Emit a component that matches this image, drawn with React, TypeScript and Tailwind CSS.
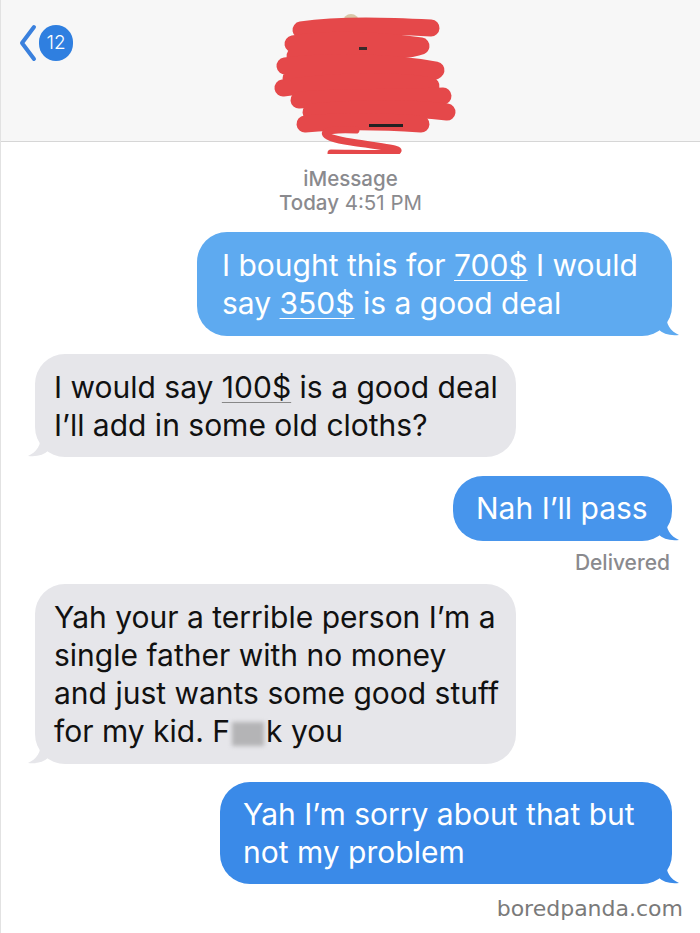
import React from 'react';

const font = { fontFamily: 'Inter, "Liberation Sans", Arial, sans-serif' };

function Tail({ side, color }: { side: 'left' | 'right'; color: string }) {
  // little iMessage hook at the bottom corner of a bubble
  if (side === 'right') {
    return (
      <svg className="absolute -right-[8px] bottom-0" width="22" height="22" viewBox="0 0 22 22">
        <path d="M0 0 L8 0 C8 10 12 17 21 21 C12 22 5 20 0 15 Z" fill={color} />
      </svg>
    );
  }
  return (
    <svg className="absolute -left-[8px] bottom-0" width="22" height="22" viewBox="0 0 22 22">
      <path d="M22 0 L14 0 C14 10 10 17 1 21 C10 22 17 20 22 15 Z" fill={color} />
    </svg>
  );
}

function Scribble() {
  return (
    <svg width="200" height="142" viewBox="0 0 200 142" className="absolute left-[270px] top-[12px]">
      <circle cx="80" cy="10" r="8" fill="#d9c7a8" />
      <g stroke="#e5484a" strokeWidth="17" strokeLinecap="round" strokeLinejoin="round" fill="none">
        <path d="M30 18 C70 12 120 14 160 16" />
        <path d="M22 32 C60 26 110 28 150 34 C130 42 60 38 24 44" />
        <path d="M14 54 C60 48 120 50 165 58 C160 66 80 62 20 66" />
        <path d="M12 76 C70 68 130 68 160 74" />
        <path d="M28 88 C80 84 130 86 172 84" />
        <path d="M40 100 C90 96 140 96 176 100" />
        <path d="M34 112 C80 108 120 110 150 112" />
      </g>
      <path d="M85 118 C40 116 50 126 80 130 C120 136 140 138 118 141 C100 142 80 141 60 141" stroke="#e5484a" strokeWidth="7" strokeLinecap="round" fill="none" />
      <rect x="88" y="35" width="8" height="3" fill="#3a2a2a" />
      <rect x="98" y="112" width="34" height="3" fill="#222" />
    </svg>
  );
}

export default function App() {
  return (
    <div className="w-[700px] h-[933px] bg-white overflow-hidden border-l border-[#e2e2e2]" style={font}>
      {/* header */}
      <div className="relative h-[142px] bg-[#f7f7f7] border-b border-[#d6d6d6]">
        <div className="flex items-center pl-[18px] pt-[24px]">
          <svg width="18" height="38" viewBox="0 0 18 38">
            <path d="M15 3 L3 19 L15 35" stroke="#3a80dd" strokeWidth="4" strokeLinecap="round" strokeLinejoin="round" fill="none" />
          </svg>
          <div className="ml-[2px] w-[34px] h-[36px] rounded-full bg-[#2f7fe0] text-white text-[19px] font-light flex items-center justify-center">
            12
          </div>
        </div>
        <Scribble />
      </div>

      {/* thread */}
      <div className="flex flex-col">
        <div className="mt-[25px] text-center text-[#8a8a8e] text-[20.5px] leading-[24px]">
          <div className="font-medium">iMessage</div>
          <div>
            <span className="font-medium">Today</span> 4:51 PM
          </div>
        </div>

        <div className="flex justify-end pr-[28px] mt-[17px]">
          <div className="relative w-[475px] h-[104px] rounded-[30px] bg-[#5eaaf0] text-white text-[30px] leading-[38px] px-[25px] py-[14px] whitespace-nowrap">
            I bought this for <span className="underline decoration-1 underline-offset-4">700$</span> I would
            <br />
            say <span className="underline decoration-1 underline-offset-4">350$</span> is a good deal
            <Tail side="right" color="#5eaaf0" />
          </div>
        </div>

        <div className="flex justify-start pl-[34px] mt-[18px]">
          <div className="relative w-[481px] h-[103px] rounded-[30px] bg-[#e6e6ea] text-[#111] text-[30px] leading-[38px] px-[19px] py-[14px] whitespace-nowrap">
            I would say <span className="underline decoration-1 decoration-[#888] underline-offset-4">100$</span> is a good deal
            <br />
            I’ll add in some old cloths?
            <Tail side="left" color="#e6e6ea" />
          </div>
        </div>

        <div className="flex justify-end pr-[28px] mt-[19px]">
          <div className="relative w-[219px] h-[65px] rounded-[30px] bg-[#4795ec] text-white text-[30px] leading-[38px] px-[23px] py-[13px] whitespace-nowrap">
            Nah I’ll pass
            <Tail side="right" color="#4795ec" />
          </div>
        </div>

        <div className="flex justify-end pr-[30px] mt-[11px] text-[21px] leading-[22px] font-medium text-[#8a8a8e]">
          Delivered
        </div>

        <div className="flex justify-start pl-[34px] mt-[10px]">
          <div className="relative w-[481px] h-[180px] rounded-[30px] bg-[#e6e6ea] text-[#111] text-[30px] leading-[38px] px-[19px] py-[14px] whitespace-nowrap">
            Yah your a terrible person I’m a
            <br />
            single father with no money
            <br />
            and just wants some good stuff
            <br />
            for my kid. F
            <span className="inline-block align-middle w-[32px] h-[24px] bg-[#b4b4b6] blur-[2px] mx-[2px]" />
            k you
            <Tail side="left" color="#e6e6ea" />
          </div>
        </div>

        <div className="flex justify-end pr-[28px] mt-[18px]">
          <div className="relative w-[452px] h-[102px] rounded-[30px] bg-[#3a8ae8] text-white text-[30px] leading-[38px] px-[23px] py-[13px] whitespace-nowrap">
            Yah I’m sorry about that but
            <br />
            not my problem
            <Tail side="right" color="#3a8ae8" />
          </div>
        </div>

        <div className="flex justify-end pr-[17px] mt-[12px] text-[22px] leading-[26px] text-[#7a7a7a]" style={{ fontFamily: '"DejaVu Sans", sans-serif' }}>
          boredpanda.com
        </div>
      </div>
    </div>
  );
}
